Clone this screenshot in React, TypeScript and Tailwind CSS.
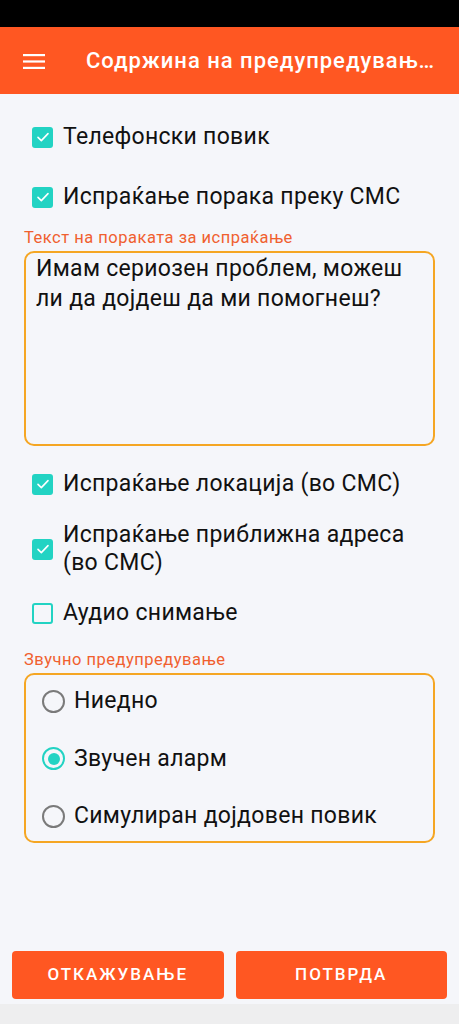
import { useState } from "react";

function CheckMark({ checked }: { checked: boolean }) {
  if (!checked) {
    return <span className="w-[21px] h-[21px] shrink-0 rounded-[3px] border-2 border-[#22d3c3] box-border" />;
  }
  return (
    <span className="w-[21px] h-[21px] shrink-0 rounded-[3px] bg-[#22d3c3] flex items-center justify-center">
      <svg width="16" height="16" viewBox="0 0 24 24" fill="none">
        <path d="M4.5 12.5l5 5L19.5 7" stroke="white" strokeWidth="2.4" strokeLinecap="round" strokeLinejoin="round" />
      </svg>
    </span>
  );
}

function Radio({ selected }: { selected: boolean }) {
  return (
    <span
      className={
        "w-[23px] h-[23px] shrink-0 rounded-full border-2 flex items-center justify-center " +
        (selected ? "border-[#22d3c3]" : "border-[#7a7a7a]")
      }
    >
      {selected && <span className="w-[12px] h-[12px] rounded-full bg-[#22d3c3]" />}
    </span>
  );
}

export default function App() {
  const [opts, setOpts] = useState({ call: true, sms: true, loc: true, addr: true, audio: false });
  const [alarm, setAlarm] = useState(1);
  const [message, setMessage] = useState("Имам сериозен проблем, можеш ли да дојдеш да ми помогнеш?");

  const toggle = (k: keyof typeof opts) => setOpts({ ...opts, [k]: !opts[k] });

  const row = "flex items-center gap-[10px] text-left text-[23px] leading-[28px] tracking-[0.3px]";

  return (
    <div className="w-[459px] h-[1024px] flex flex-col bg-[#f5f6fa] text-[#111] font-['Roboto',sans-serif]">
      {/* Status bar */}
      <div className="h-[27px] bg-black shrink-0" />

      {/* App bar */}
      <div className="h-[67px] bg-[#ff5722] flex items-center shrink-0">
        <div className="w-[86px] shrink-0 pl-[23px] pt-[1px]">
          <svg width="22" height="15" viewBox="0 0 22 15">
            <rect x="0" y="0" width="22" height="2.2" fill="white" />
            <rect x="0" y="6.4" width="22" height="2.2" fill="white" />
            <rect x="0" y="12.8" width="22" height="2.2" fill="white" />
          </svg>
        </div>
        <h1 className="min-w-0 text-white text-[22px] font-medium truncate pr-[14px] tracking-[1px]">
          Содржина на предупредувања за итни случаи
        </h1>
      </div>

      {/* Content */}
      <div className="flex-1 px-[24px] pt-[29px]">
        <div className="flex flex-col gap-[32px] pl-[8px]">
          <button onClick={() => toggle("call")} className={row}>
            <CheckMark checked={opts.call} />
            Телефонски повик
          </button>
          <button onClick={() => toggle("sms")} className={row}>
            <CheckMark checked={opts.sms} />
            Испраќање порака преку СМС
          </button>
        </div>

        <p className="mt-[18px] text-[16.5px] leading-[18px] tracking-[0.5px] text-[#f0602f]">
          Текст на пораката за испраќање
        </p>
        <textarea
          value={message}
          onChange={(e) => setMessage(e.target.value)}
          className="block mt-[4px] w-[411px] h-[195px] resize-none rounded-[10px] border-[2.5px] border-[#f5a623] bg-transparent px-[10px] pt-[1px] text-[23px] leading-[30px] tracking-[0.3px] text-[#111] outline-none"
        />

        <div className="mt-[24px] flex flex-col gap-[22px] pl-[8px]">
          <button onClick={() => toggle("loc")} className={row}>
            <CheckMark checked={opts.loc} />
            Испраќање локација (во СМС)
          </button>
          <button onClick={() => toggle("addr")} className={row + " mt-[1px]"}>
            <CheckMark checked={opts.addr} />
            <span>
              Испраќање приближна адреса
              <br />
              (во СМС)
            </span>
          </button>
          <button onClick={() => toggle("audio")} className={row}>
            <CheckMark checked={opts.audio} />
            Аудио снимање
          </button>
        </div>

        <p className="mt-[24px] text-[16.5px] leading-[18px] tracking-[0.5px] text-[#f0602f]">
          Звучно предупредување
        </p>
        <div className="mt-[4px] w-[411px] h-[170px] rounded-[10px] border-[2.5px] border-[#f5a623] px-[16px] pt-[12px] flex flex-col gap-[29.5px]">
          {["Ниедно", "Звучен аларм", "Симулиран дојдовен повик"].map((label, i) => (
            <button key={label} onClick={() => setAlarm(i)} className="flex items-center gap-[9px] text-left text-[23px] leading-[28px] tracking-[0.3px]">
              <Radio selected={alarm === i} />
              {label}
            </button>
          ))}
        </div>
      </div>

      {/* Buttons */}
      <div className="px-[12px] pb-[5px] flex gap-[12px] shrink-0">
        <button className="flex-1 h-[48px] rounded-[4px] bg-[#ff5722] text-white text-[17px] font-medium tracking-[2px]">
          ОТКАЖУВАЊЕ
        </button>
        <button className="flex-1 h-[48px] rounded-[4px] bg-[#ff5722] text-white text-[17px] font-medium tracking-[2px]">
          ПОТВРДА
        </button>
      </div>
      <div className="h-[20px] bg-[#eeeeef] shrink-0" />
    </div>
  );
}
